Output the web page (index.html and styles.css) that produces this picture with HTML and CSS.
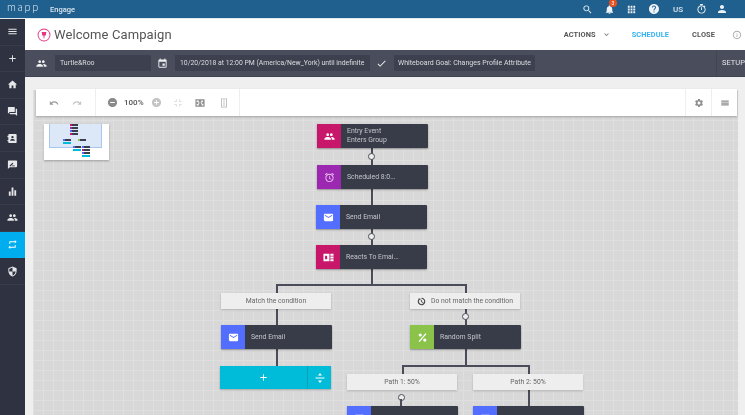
FILE: index.html
```html
<!DOCTYPE html>
<html lang="en">
<head>
<meta charset="utf-8">
<title>Welcome Campaign</title>
<link rel="stylesheet" href="styles.css">
</head>
<body>
<svg class="sprite" xmlns="http://www.w3.org/2000/svg">
  <symbol id="i-menu" viewBox="0 0 24 24"><path d="M3 18h18v-2H3v2zm0-5h18v-2H3v2zm0-7v2h18V6H3z"/></symbol>
  <symbol id="i-add" viewBox="0 0 24 24"><path d="M19 13h-6v6h-2v-6H5v-2h6V5h2v6h6v2z"/></symbol>
  <symbol id="i-home" viewBox="0 0 24 24"><path d="M10 20v-6h4v6h5v-8h3L12 3 2 12h3v8z"/></symbol>
  <symbol id="i-forum" viewBox="0 0 24 24"><path d="M21 6h-2v9H6v2c0 .55.45 1 1 1h11l4 4V7c0-.55-.45-1-1-1zm-4 6V3c0-.55-.45-1-1-1H3c-.55 0-1 .45-1 1v14l4-4h10c.55 0 1-.45 1-1z"/></symbol>
  <symbol id="i-contacts" viewBox="0 0 24 24"><path d="M19 2H5c-1.100 0-2 .9-2 2v16c0 1.100.9 2 2 2h14c1.100 0 2-.9 2-2V4c0-1.100-.9-2-2-2zm-7 4.500c1.500 0 2.500 1.100 2.500 2.500s-1 2.500-2.500 2.500S9.500 10.400 9.500 9s1-2.500 2.500-2.500zM17 17H7v-1.500c0-1.700 3.300-2.500 5-2.500s5 .8 5 2.500V17zM1 6h2v3H1zm0 9h2v3H1z"/></symbol>
  <symbol id="i-feedback" viewBox="0 0 24 24"><path d="M20 3H4c-1.100 0-2 .9-2 2v17l4-4h14c1.100 0 2-.9 2-2V5c0-1.100-.9-2-2-2zM6 14l6-6 2 2-6 6H6v-2zm11 2h-7l2-2h5v2z"/></symbol>
  <symbol id="i-bars" viewBox="0 0 24 24"><path d="M4 12h4v9H4zm6-9h4v18h-4zm6 6h4v12h-4z"/></symbol>
  <symbol id="i-people" viewBox="0 0 24 24"><path d="M16 11c1.660 0 2.990-1.340 2.990-3S17.660 5 16 5c-1.660 0-3 1.340-3 3s1.340 3 3 3zm-8 0c1.660 0 2.990-1.340 2.990-3S9.660 5 8 5C6.340 5 5 6.340 5 8s1.340 3 3 3zm0 2c-2.330 0-7 1.170-7 3.500V19h14v-2.500c0-2.330-4.670-3.500-7-3.500zm8 0c-.29 0-.62.02-.97.05 1.160.84 1.970 1.970 1.970 3.450V19h6v-2.500c0-2.330-4.670-3.500-7-3.500z"/></symbol>
  <symbol id="i-repeat" viewBox="0 0 24 24"><path d="M7 7h10v3l4-4-4-4v3H5v6h2V7zm10 10H7v-3l-4 4 4 4v-3h12v-6h-2v4z"/></symbol>
  <symbol id="i-shield" viewBox="0 0 24 24"><path d="M12 1L3 5v6c0 5.550 3.840 10.740 9 12 5.160-1.260 9-6.450 9-12V5l-9-4zm0 11h7c-.53 4.120-3.280 7.790-7 8.940V12H5V6.300l7-3.110V12z"/></symbol>
  <symbol id="i-search" viewBox="0 0 24 24"><path d="M15.500 14h-.79l-.28-.27C15.410 12.590 16 11.110 16 9.500 16 5.910 13.090 3 9.500 3S3 5.910 3 9.500 5.910 16 9.500 16c1.610 0 3.090-.59 4.230-1.570l.27.28v.79l5 4.990L20.490 19l-4.990-5zm-6 0C7.010 14 5 11.990 5 9.500S7.010 5 9.500 5 14 7.010 14 9.500 11.990 14 9.500 14z"/></symbol>
  <symbol id="i-bell" viewBox="0 0 24 24"><path d="M12 22c1.100 0 2-.9 2-2h-4c0 1.100.89 2 2 2zm6-6v-5c0-3.070-1.640-5.640-4.500-6.320V4c0-.83-.67-1.500-1.500-1.500s-1.500.67-1.500 1.500v.68C7.630 5.360 6 7.920 6 11v5l-2 2v1h16v-1l-2-2z"/></symbol>
  <symbol id="i-apps" viewBox="0 0 24 24"><path d="M4 8h4V4H4v4zm6 12h4v-4h-4v4zm-6 0h4v-4H4v4zm0-6h4v-4H4v4zm6 0h4v-4h-4v4zm6-10v4h4V4h-4zm-6 4h4V4h-4v4zm6 6h4v-4h-4v4zm0 6h4v-4h-4v4z"/></symbol>
  <symbol id="i-help" viewBox="0 0 24 24"><path d="M12 2C6.480 2 2 6.480 2 12s4.480 10 10 10 10-4.480 10-10S17.520 2 12 2zm1 17h-2v-2h2v2zm2.070-7.750l-.9.92C13.450 12.900 13 13.500 13 15h-2v-.5c0-1.100.45-2.100 1.170-2.830l1.240-1.260c.37-.36.59-.86.59-1.410 0-1.100-.9-2-2-2s-2 .9-2 2H8c0-2.210 1.790-4 4-4s4 1.790 4 4c0 .88-.36 1.680-.93 2.250z"/></symbol>
  <symbol id="i-timer" viewBox="0 0 24 24"><path d="M15 1H9v2h6V1zm-4 13h2V8h-2v6zm8.030-6.610l1.420-1.420c-.43-.51-.9-.99-1.410-1.410l-1.420 1.420C16.070 4.740 14.120 4 12 4c-4.970 0-9 4.030-9 9s4.020 9 9 9 9-4.030 9-9c0-2.120-.74-4.070-1.970-5.610zM12 20c-3.870 0-7-3.130-7-7s3.130-7 7-7 7 3.130 7 7-3.130 7-7 7z"/></symbol>
  <symbol id="i-person" viewBox="0 0 24 24"><path d="M12 12c2.210 0 4-1.790 4-4s-1.790-4-4-4-4 1.790-4 4 1.790 4 4 4zm0 2c-2.670 0-8 1.340-8 4v2h16v-2c0-2.660-5.330-4-8-4z"/></symbol>
  <symbol id="i-event" viewBox="0 0 24 24"><path d="M17 12h-5v5h5v-5zM16 1v2H8V1H6v2H5c-1.110 0-1.990.9-1.990 2L3 19c0 1.100.89 2 2 2h14c1.100 0 2-.9 2-2V5c0-1.100-.9-2-2-2h-1V1h-2zm3 18H5V8h14v11z"/></symbol>
  <symbol id="i-check" viewBox="0 0 24 24"><path d="M9 16.170L4.830 12l-1.420 1.410L9 19 21 7l-1.410-1.410z"/></symbol>
  <symbol id="i-undo" viewBox="0 0 24 24"><path d="M12.500 8c-2.650 0-5.050.99-6.900 2.600L2 7v9h9l-3.620-3.620c1.390-1.160 3.160-1.880 5.120-1.880 3.540 0 6.550 2.310 7.600 5.500l2.370-.78C21.080 11.030 17.150 8 12.500 8z"/></symbol>
  <symbol id="i-redo" viewBox="0 0 24 24"><path d="M18.400 10.600C16.550 8.990 14.150 8 11.500 8c-4.650 0-8.580 3.030-9.960 7.220L3.900 16c1.050-3.190 4.050-5.500 7.600-5.500 1.950 0 3.730.72 5.120 1.880L13 16h9V7l-3.600 3.600z"/></symbol>
  <symbol id="i-minus-c" viewBox="0 0 24 24"><path d="M12 2C6.480 2 2 6.480 2 12s4.480 10 10 10 10-4.480 10-10S17.520 2 12 2zm5 11H7v-2h10v2z"/></symbol>
  <symbol id="i-plus-c" viewBox="0 0 24 24"><path d="M12 2C6.480 2 2 6.480 2 12s4.480 10 10 10 10-4.480 10-10S17.520 2 12 2zm5 11h-4v4h-2v-4H7v-2h4V7h2v4h4v2z"/></symbol>
  <symbol id="i-fit" viewBox="0 0 24 24"><path d="M9 3H7v4H3v2h6V3zm8 0h-2v6h6V7h-4V3zM3 15v2h4v4h2v-6H3zm12 0v6h2v-4h4v-2h-6z"/></symbol>
  <symbol id="i-expand" viewBox="0 0 24 24"><path fill-rule="evenodd" d="M1 3h22v18H1V3zm3 3v5l2-2 3 3 2-2-3-3 2-1H4zm16 0h-6l2 1-3 3 2 2 3-3 1 2V6zM4 18h6l-2-1 3-3-2-2-3 3-2-2v5zm16 0v-5l-1 2-3-3-2 2 3 3-2 1h5z"/></symbol>
  <symbol id="i-vert" viewBox="0 0 24 24"><path fill-rule="evenodd" d="M5 1h14v22H5V1zm2 2v18h10V3H7zm5 2l3 3H9l3-3zm-2 6h4v2h-4v-2zm-1 5h6l-3 3-3-3z"/></symbol>
  <symbol id="i-gear" viewBox="0 0 24 24"><path d="M19.140 12.940c.04-.3.06-.61.06-.94 0-.32-.02-.64-.07-.94l2.030-1.580c.18-.14.23-.41.12-.61l-1.920-3.320c-.12-.22-.37-.29-.59-.22l-2.390.96c-.5-.38-1.030-.7-1.620-.94l-.36-2.540c-.04-.24-.24-.41-.48-.41h-3.840c-.24 0-.43.17-.47.41l-.36 2.540c-.59.24-1.130.57-1.620.94l-2.390-.96c-.22-.08-.47 0-.59.22L2.740 8.870c-.12.21-.08.47.12.61l2.030 1.580c-.05.3-.09.63-.09.94s.02.64.07.94l-2.030 1.580c-.18.14-.23.41-.12.61l1.920 3.320c.12.22.37.29.59.22l2.390-.96c.5.38 1.030.7 1.620.94l.36 2.540c.05.24.24.41.48.41h3.840c.24 0 .44-.17.47-.41l.36-2.540c.59-.24 1.130-.56 1.620-.94l2.390.96c.22.08.47 0 .59-.22l1.920-3.320c.12-.22.07-.47-.12-.61l-2.010-1.580zM12 15.600c-1.980 0-3.600-1.620-3.600-3.600s1.620-3.600 3.600-3.600 3.600 1.620 3.600 3.600-1.620 3.600-3.600 3.600z"/></symbol>
  <symbol id="i-list" viewBox="0 0 24 24"><path d="M3 6h18v3H3zm0 4.500h18v3H3zM3 15h18v3H3z"/></symbol>
  <symbol id="i-mail" viewBox="0 0 24 24"><path d="M20 4H4c-1.100 0-1.990.9-1.990 2L2 18c0 1.100.9 2 2 2h16c1.100 0 2-.9 2-2V6c0-1.100-.9-2-2-2zm0 4l-8 5-8-5V6l8 5 8-5v2z"/></symbol>
  <symbol id="i-alarm" viewBox="0 0 24 24"><path d="M22 5.720l-4.600-3.860-1.290 1.530 4.600 3.860L22 5.720zM7.880 3.390L6.600 1.860 2 5.710l1.290 1.530 4.590-3.850zM12.500 8H11v6l4.750 2.850.75-1.230-4-2.370V8zM12 4c-4.970 0-9 4.030-9 9s4.030 9 9 9 9-4.030 9-9-4.030-9-9-9zm0 16c-3.870 0-7-3.130-7-7s3.130-7 7-7 7 3.130 7 7-3.130 7-7 7z"/></symbol>
  <symbol id="i-book" viewBox="0 0 24 24"><path fill-rule="evenodd" d="M1 4h13v16H1V4zm3.500 4v8h3a2 2 0 0 0 2-2.200c0-.9-.5-1.500-1.100-1.800.5-.3.8-.9.8-1.600 0-1.400-1-2.400-2.400-2.400H4.500zM16 4h7v4h-7V4zm0 6h7v4h-7v-4zm0 6h7v4h-7v-4z"/></symbol>
  <symbol id="i-percent" viewBox="0 0 24 24"><path d="M18.500 2.500L3.500 20l2.200 1.800 15-17.500zM7 3a3.500 3.500 0 1 0 0 7 3.500 3.500 0 0 0 0-7zm10 11a3.500 3.500 0 1 0 0 7 3.500 3.500 0 0 0 0-7z"/></symbol>
  <symbol id="i-split" viewBox="0 0 24 24"><path d="M3 11h18v2H3zm9-9l4 5H8zm0 20l-4-5h8z"/></symbol>
  <symbol id="i-history" viewBox="0 0 24 24"><path fill-rule="evenodd" d="M12 2a10 10 0 1 1-7.500 3.400L3 4h6v6L6.600 7.600A7 7 0 1 0 12 5V2zm-1 5h2v5l4 2-1 2-5-2.500V7z"/></symbol>
  <symbol id="i-pin" viewBox="0 0 24 24"><path fill-rule="evenodd" d="M12 1a11 11 0 1 1 0 22 11 11 0 0 1 0-22zm0 1.500a9.500 9.500 0 1 0 0 19 9.500 9.500 0 0 0 0-19zM8 7h8l-1 6h-2l-.5 5h-1L11 13H9L8 7z"/></symbol>
  <symbol id="i-info" viewBox="0 0 24 24"><path d="M11 7h2v2h-2zm0 4h2v6h-2zm1-9C6.480 2 2 6.480 2 12s4.480 10 10 10 10-4.480 10-10S17.520 2 12 2zm0 18c-4.410 0-8-3.590-8-8s3.590-8 8-8 8 3.590 8 8-3.590 8-8 8z"/></symbol>
  <symbol id="i-down" viewBox="0 0 24 24"><path d="M7.410 8.590L12 13.170l4.590-4.580L18 10l-6 6-6-6z"/></symbol>
</svg>

<div class="app">
  <header class="topbar">
    <span class="logo">mapp</span>
    <span class="product">Engage</span>
    <div class="top-actions">
      <svg class="ti ti-search"><use href="#i-search"/></svg>
      <span class="bell"><svg class="ti"><use href="#i-bell"/></svg><span class="badge">3</span></span>
      <svg class="ti ti-apps"><use href="#i-apps"/></svg>
      <svg class="ti ti-help"><use href="#i-help"/></svg>
      <span class="locale">US</span>
      <svg class="ti ti-timer"><use href="#i-timer"/></svg>
      <svg class="ti ti-person"><use href="#i-person"/></svg>
    </div>
  </header>

  <div class="body-row">
    <nav class="sidebar">
      <a class="nav-item"><svg><use href="#i-menu"/></svg></a>
      <a class="nav-item"><svg><use href="#i-add"/></svg></a>
      <a class="nav-item"><svg><use href="#i-home"/></svg></a>
      <a class="nav-item"><svg><use href="#i-forum"/></svg></a>
      <a class="nav-item"><svg><use href="#i-contacts"/></svg></a>
      <a class="nav-item"><svg><use href="#i-feedback"/></svg></a>
      <a class="nav-item"><svg><use href="#i-bars"/></svg></a>
      <a class="nav-item"><svg><use href="#i-people"/></svg></a>
      <a class="nav-item active"><svg><use href="#i-repeat"/></svg></a>
      <a class="nav-item"><svg><use href="#i-shield"/></svg></a>
    </nav>

    <main class="content">
      <section class="title-row">
        <svg class="title-icon"><use href="#i-pin"/></svg>
        <h1 class="title">Welcome Campaign</h1>
        <div class="title-actions">
          <span class="act">ACTIONS</span>
          <svg class="chev"><use href="#i-down"/></svg>
          <span class="act sched">SCHEDULE</span>
          <span class="act close">CLOSE</span>
          <svg class="info"><use href="#i-info"/></svg>
        </div>
      </section>

      <section class="setup-row">
        <svg class="si si-first"><use href="#i-people"/></svg>
        <span class="field f-audience">Turtle&amp;Roo</span>
        <svg class="si si-mid"><use href="#i-event"/></svg>
        <span class="field f-date">10/20/2018 at 12:00 PM (America/New_York) until indefinite</span>
        <svg class="si si-check"><use href="#i-check"/></svg>
        <span class="field f-goal">Whiteboard Goal: Changes Profile Attribute</span>
        <span class="setup">SETUP</span>
      </section>

      <section class="workspace">
        <div class="canvas">
          <div class="toolbar">
            <div class="tool-group g-hist">
              <svg class="tool light"><use href="#i-undo"/></svg>
              <svg class="tool lighter"><use href="#i-redo"/></svg>
            </div>
            <div class="tool-group g-zoom">
              <svg class="tool dark"><use href="#i-minus-c"/></svg>
              <span class="pct">100%</span>
              <svg class="tool lighter"><use href="#i-plus-c"/></svg>
              <svg class="tool faint"><use href="#i-fit"/></svg>
              <svg class="tool mid wide"><use href="#i-expand"/></svg>
              <svg class="tool mid vert"><use href="#i-vert"/></svg>
            </div>
            <div class="tool-spacer"></div>
            <div class="tool-cell"><svg class="tool mid"><use href="#i-gear"/></svg></div>
            <div class="tool-cell"><svg class="tool mid"><use href="#i-list"/></svg></div>
          </div>

          <div class="minimap">
            <div class="mini-view"></div>
            <i class="mini m1"></i><i class="mini m2"></i><i class="mini m3"></i><i class="mini m4"></i>
            <i class="mini m5"></i><i class="mini m6"></i><i class="mini m7"></i><i class="mini m8"></i>
            <i class="mini m9"></i><i class="mini m10"></i><i class="mini m11"></i><i class="mini m12"></i>
            <i class="mini m13"></i>
          </div>

          <!-- connectors -->
          <i class="ln v l1"></i><i class="ln h l2"></i><i class="ln v l3"></i><i class="ln v l4"></i>
          <i class="ln v l5"></i><i class="ln v l6"></i><i class="ln v l7"></i><i class="ln h l8"></i>
          <i class="ln v l9"></i><i class="ln v l10"></i><i class="ln v l11"></i>
          <i class="dot d1"></i><i class="dot d2"></i><i class="dot d3"></i><i class="dot d4"></i>

          <div class="node n1"><span class="ico pink"><svg><use href="#i-people"/></svg></span><span class="txt two">Entry Event<br>Enters Group</span></div>
          <div class="node n2"><span class="ico purple"><svg><use href="#i-alarm"/></svg></span><span class="txt">Scheduled 8:0...</span></div>
          <div class="node n3"><span class="ico blue"><svg><use href="#i-mail"/></svg></span><span class="txt">Send Email</span></div>
          <div class="node n4"><span class="ico pink"><svg><use href="#i-book"/></svg></span><span class="txt">Reacts To Emai...</span></div>

          <div class="label b1">Match the condition</div>
          <div class="label b2"><svg><use href="#i-history"/></svg>Do not match the condition</div>

          <div class="node n5"><span class="ico blue"><svg><use href="#i-mail"/></svg></span><span class="txt">Send Email</span></div>
          <div class="node n6"><span class="ico green"><svg><use href="#i-percent"/></svg></span><span class="txt">Random Split</span></div>

          <div class="adder"><span class="add-main"><svg><use href="#i-add"/></svg></span><span class="add-side"><svg><use href="#i-split"/></svg></span></div>

          <div class="label b3">Path 1: 50%</div>
          <div class="label b4">Path 2: 50%</div>

          <div class="node n7"><span class="ico blue"><svg><use href="#i-mail"/></svg></span><span class="txt"></span></div>
          <div class="node n8"><span class="ico blue"><svg><use href="#i-mail"/></svg></span><span class="txt"></span></div>
        </div>
      </section>
    </main>
  </div>
</div>
</body>
</html>
```

FILE: styles.css
```css
* { box-sizing: border-box; }
html, body { margin: 0; height: 100%; overflow: hidden; }
body { font-family: Roboto, "Liberation Sans", sans-serif; color: #444; background: #efefef; }
.sprite { position: absolute; width: 0; height: 0; }
svg { fill: currentColor; display: block; }

.app { width: 745px; height: 415px; display: flex; flex-direction: column; overflow: hidden; filter: blur(.55px); }

/* top bar */
.topbar { height: 19px; flex: none; background: #20608f; display: flex; align-items: center; color: #fff; border-bottom: 1px solid #dfe9f0; }
.logo { font-family: Lato, sans-serif; font-weight: 300; font-size: 11px; align-self: flex-start; margin-left: 7px; width: 43px; letter-spacing: 1.700px; color: #e4edf3; }
.product { font-size: 7.500px; font-weight: 500; color: #dbe6ee; }
.top-actions { margin-left: auto; display: flex; align-items: center; color: #eef3f7; }
.ti { width: 11px; height: 11px; }
.ti-search { margin-right: 11px; }
.bell { position: relative; width: 11px; height: 11px; margin-right: 11px; }
.badge { position: absolute; left: 5px; top: -5px; width: 8px; height: 8px; border-radius: 50%; background: #e8501f; font-size: 5px; line-height: 8px; text-align: center; color: #fff; }
.ti-apps { margin-right: 10.500px; }
.ti-help { width: 12px; height: 12px; margin-right: 13.500px; }
.locale { font-size: 8px; font-weight: 500; width: 10px; margin-right: 12.500px; color: #dbe6ee; }
.ti-timer { width: 11px; height: 12px; margin-right: 9.500px; }
.ti-person { width: 12px; height: 12px; margin-right: 17px; }

.body-row { flex: 1; display: flex; min-height: 0; }

/* sidebar */
.sidebar { width: 25px; flex: none; background: #2f3240; color: #e7e8ea; }
.nav-item { height: 26.600px; display: flex; align-items: center; justify-content: center; border-bottom: 1px solid #393c4a; }
.nav-item svg { width: 11px; height: 11px; }
.nav-item.active { background: #00aeef; color: #fff; border-color: #00aeef; }

.content { flex: 1; min-width: 0; display: flex; flex-direction: column; background: #efefef; }

/* title */
.title-row { height: 31px; flex: none; background: #fff; display: flex; align-items: center; }
.title-icon { width: 14px; height: 14px; color: #e6337f; margin-left: 11.500px; }
.title { margin: 0 0 0 3.500px; font-size: 13px; font-weight: 400; color: #555; letter-spacing: .1px; }
.title-actions { margin-left: auto; display: flex; align-items: center; }
.act { font-size: 7.400px; font-weight: 700; color: #555; letter-spacing: .1px; }
.chev { width: 9px; height: 9px; margin: 0 21px 0 6px; color: #666; }
.sched { color: #35b2f2; margin-right: 23px; }
.close { margin-right: 17px; }
.info { width: 10px; height: 10px; color: #aaa; margin-right: 3px; }

/* setup bar */
.setup-row { height: 27px; flex: none; background: #4a4e5c; display: flex; align-items: center; color: #eee; border-bottom: 1px solid #3f434f; }
.si { width: 11px; height: 11px; color: #eee; }
.si-first { margin-left: 11px; margin-right: 8px; }
.si-mid { margin: 0 7.500px 0 5.500px; }
.si-check { margin: 0 7.500px 0 5.500px; }
.field { height: 16px; line-height: 16px; background: #3d414f; font-size: 7px; color: #dcdde0; padding-left: 5px; white-space: nowrap; }
.f-audience { width: 96px; }
.f-date { width: 195px; font-size: 6.850px; }
.f-goal { width: 141px; padding-left: 4px; }
.setup { margin-left: auto; width: 29px; align-self: stretch; line-height: 26px; padding-left: 5px; font-size: 7.500px; border-left: 1px solid #424653; color: #e4e5e8; }

/* workspace */
.workspace { flex: 1; min-height: 0; padding: 13px 7px 0 8px; }
.canvas {
  display: flow-root; position: relative; height: 100%; padding-left: 3px; padding-right: 1px;
  background-color: #d8d8d8;
  background-image:
    linear-gradient(#dfdfdf 1px, transparent 1px),
    linear-gradient(90deg, #dfdfdf 1px, transparent 1px);
  background-size: 10px 10px;
}
.toolbar { position: relative; z-index: 2; height: 27px; margin-top: -1px; background: #fff; display: flex; align-items: center; box-shadow: 0 1px 2px rgba(0,0,0,.25); }
.tool-group { display: flex; align-items: center; height: 100%; border-right: 1px solid #eee; }
.g-hist { width: 60px; padding-left: 13px; gap: 13px; }
.g-zoom { width: 144px; padding-left: 11px; }
.tool { width: 10px; height: 10px; }
.tool.light { color: #999; }
.tool.lighter { color: #c4c4c4; }
.tool.dark { color: #8a8a8a; width: 11px; height: 11px; }
.tool.mid { color: #8e8e8e; }
.tool.faint { color: #d4d4d4; margin-left: 11px; margin-right: 12px; }
.tool.wide { width: 10px; height: 10px; }
.tool.vert { margin-left: 14px; height: 12px; color: #b5b5b5; }
.g-zoom .tool.lighter { width: 11px; height: 11px; }
.pct { font-size: 8px; color: #555; font-weight: 500; margin: 0 7px 0 6px; }
.tool-spacer { flex: 1; }
.tool-cell { width: 26px; height: 100%; display: flex; align-items: center; justify-content: center; border-left: 1px solid #eee; }

/* minimap */
.minimap { position: absolute; left: 11px; top: 34px; width: 65px; height: 36px; background: #fff; box-shadow: 0 1px 2px rgba(0,0,0,.3); overflow: hidden; }
.mini-view { position: absolute; left: 5px; top: -1px; width: 53px; height: 25px; background: #dce8f8; border: 1px solid #a9c6ec; }
.mini { position: absolute; display: block; width: 8px; height: 2px; background: #3a3e4c; }
.m1 { left: 26px; top: 0; background: linear-gradient(90deg, #c8166b 25%, #3a3e4c 25%); }
.m2 { left: 26px; top: 3px; background: linear-gradient(90deg, #9c27b0 25%, #3a3e4c 25%); }
.m3 { left: 26px; top: 6px; background: linear-gradient(90deg, #536dfe 25%, #3a3e4c 25%); }
.m4 { left: 26px; top: 9px; background: linear-gradient(90deg, #c8166b 25%, #3a3e4c 25%); }
.m5 { left: 19px; top: 15px; background: linear-gradient(90deg, #536dfe 25%, #3a3e4c 25%); }
.m6 { left: 19px; top: 18px; background: #00bcd9; }
.m7 { left: 34px; top: 15px; background: linear-gradient(90deg, #8bc34a 25%, #3a3e4c 25%); }
.m8 { left: 29px; top: 22px; background: linear-gradient(90deg, #536dfe 25%, #3a3e4c 25%); }
.m9 { left: 29px; top: 25px; background: #00bcd9; }
.m10 { left: 38px; top: 22px; background: linear-gradient(90deg, #536dfe 25%, #3a3e4c 25%); }
.m11 { left: 38px; top: 25px; background: linear-gradient(90deg, #c8166b 25%, #3a3e4c 25%); }
.m12 { left: 38px; top: 28px; background: linear-gradient(90deg, #536dfe 25%, #3a3e4c 25%); }
.m13 { left: 38px; top: 31px; background: #00bcd9; }

/* diagram: canvas origin is at page (33, 90) */
.node { position: absolute; width: 111px; height: 24px; background: #383b48; display: flex; border-radius: 1px; box-shadow: 0 1px 2px rgba(0,0,0,.35); }
.ico { width: 24px; flex: none; display: flex; align-items: center; justify-content: center; color: #fff; }
.ico svg { width: 11px; height: 11px; }
.pink { background: #c8166b; }
.purple { background: #9c27b0; color: #e8c8ee; }
.blue { background: #536dfe; }
.green { background: #8bc34a; }
.txt { font-size: 6.900px; color: #c4c5ca; padding-left: 6px; line-height: 24px; white-space: nowrap; }
.txt.two { line-height: 9px; padding-top: 3px; }
.n1 { left: 284px; top: 34px; }
.n2 { left: 284px; top: 75px; width: 111px; }
.n3 { left: 283px; top: 115px; }
.n4 { left: 283px; top: 155px; }
.n5 { left: 188px; top: 235px; }
.n6 { left: 377px; top: 235px; }
.n7 { left: 314px; top: 316px; }
.n8 { left: 440px; top: 316px; }

.label { position: absolute; width: 110px; height: 16px; background: #eeeeee; font-size: 6.800px; color: #666; display: flex; align-items: center; justify-content: center; box-shadow: 0 1px 2px rgba(0,0,0,.2); }
.label svg { width: 9px; height: 9px; margin-right: 5px; color: #444; }
.b1 { left: 188px; top: 203px; }
.b2 { left: 377px; top: 203px; }
.b3 { left: 314px; top: 284px; }
.b4 { left: 440px; top: 284px; }

.ln { position: absolute; display: block; background: #4a4d59; }
.ln.v { width: 1.500px; }
.ln.h { height: 1.500px; }
.l1 { left: 338px; top: 58px; height: 136px; }
.l2 { left: 243px; top: 194px; width: 190px; }
.l3 { left: 243px; top: 194px; height: 10px; }
.l4 { left: 432px; top: 194px; height: 10px; }
.l5 { left: 243px; top: 219px; height: 17px; }
.l6 { left: 432px; top: 219px; height: 17px; }
.l7 { left: 243px; top: 259px; height: 17px; }
.l8 { left: 369px; top: 275px; width: 127px; }
.l9 { left: 432px; top: 259px; height: 17px; }
.l10 { left: 369px; top: 275px; height: 10px; }
.l11 { left: 495px; top: 275px; height: 42px; }

.dot { position: absolute; width: 7px; height: 7px; border-radius: 50%; background: #eee; border: 1.500px solid #4a4d59; z-index: 1; }
.d1 { left: 335px; top: 63px; }
.d2 { left: 335px; top: 143px; }
.d3 { left: 429px; top: 223px; }
.d4 { left: 365px; top: 304px; }
.d4::after { content: ""; position: absolute; left: 1px; top: 4px; width: 1.500px; height: 7px; background: #4a4d59; }

.adder { position: absolute; left: 187px; top: 276px; width: 111px; height: 23px; background: #00bcd9; display: flex; color: #fff; box-shadow: 0 1px 2px rgba(0,0,0,.25); }
.add-main { flex: 1; display: flex; align-items: center; justify-content: center; }
.add-main svg { width: 11px; height: 11px; }
.add-side { width: 24px; border-left: 1px solid #0aa2bb; display: flex; align-items: center; justify-content: center; }
.add-side svg { width: 12px; height: 12px; }
```
